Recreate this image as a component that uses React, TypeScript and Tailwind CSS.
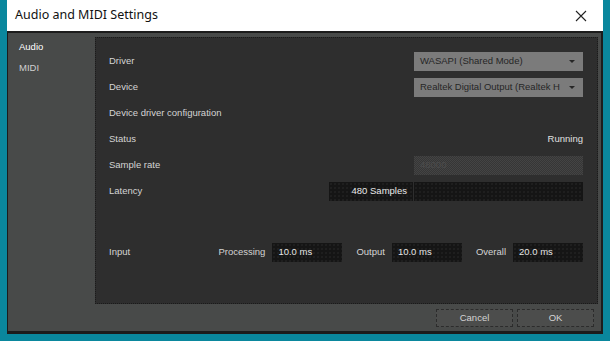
import { ReactNode } from 'react'

const font = { fontFamily: '"Liberation Sans", Arial, sans-serif' }

const dots =
  'bg-[#151515] bg-[image:radial-gradient(#2a2a2a_0.6px,transparent_0.8px)] bg-[length:4px_4px]'

function Row({ label, children }: { label: string; children?: ReactNode }) {
  return (
    <div className="h-[19px] flex items-center justify-between">
      <span className="text-[9.5px] text-[#d4d4d4]">{label}</span>
      {children}
    </div>
  )
}

function Select({ value }: { value: string }) {
  return (
    <div className="w-[169px] h-[19px] bg-[#7b7b7b] flex items-center pl-[6px] pr-[8px] gap-[4px]">
      <span className="flex-1 text-[9.5px] text-[#262626] whitespace-nowrap">{value}</span>
      <span className="w-0 h-0 border-l-[3px] border-r-[3px] border-t-[3px] border-l-transparent border-r-transparent border-t-[#262626]" />
    </div>
  )
}

function TimeBox({ label, value }: { label: string; value: string }) {
  return (
    <div className="flex items-center gap-[7px]">
      <span className="text-[9.5px] text-[#d4d4d4]">{label}</span>
      <div className={`w-[70px] h-[19px] ${dots} flex items-center pl-[6px] text-[9.5px] text-[#e6e6e6]`}>
        {value}
      </div>
    </div>
  )
}

export default function App() {
  return (
    <div className="w-[610px] h-[341px] bg-[#0a879d] overflow-hidden" style={font}>
      <div className="ml-[7px] w-[596px] h-[334px] flex flex-col">
        {/* title bar */}
        <div className="h-[31px] bg-white flex items-center justify-between pl-[8px] pr-[16px] shrink-0">
          <span className="text-[12.5px] text-[#111]" style={{ fontFamily: '"Noto Sans", "Open Sans", sans-serif' }}>
            Audio and MIDI Settings
          </span>
          <svg width="12" height="12" viewBox="0 0 12 12" className="text-[#222]">
            <path d="M1 1L11 11M11 1L1 11" stroke="currentColor" strokeWidth="1.1" />
          </svg>
        </div>

        {/* body */}
        <div className="flex-1 bg-[#484a49] border-[#1c1c1c] border-t-2 border-l border-r-2 border-b-[3px] flex">
          <div className="w-[87px] shrink-0 pt-[7px] pl-[11px] flex flex-col gap-[7px] text-[9.5px]">
            <span className="text-white">Audio</span>
            <span className="text-[#d0d0d0]">MIDI</span>
          </div>

          <div className="flex-1 flex flex-col pt-[4px] pr-[3px]">
            <div className="h-[267px] bg-[#2e2e2e] border border-dotted border-[#1a1a1a] pt-[14px] pl-[13px] pr-[14px] flex flex-col">
              <div className="flex flex-col gap-[7px]">
                <Row label="Driver">
                  <Select value="WASAPI (Shared Mode)" />
                </Row>
                <Row label="Device">
                  <Select value="Realtek Digital Output (Realtek H" />
                </Row>
                <Row label="Device driver configuration" />
                <Row label="Status">
                  <span className="text-[9.5px] text-[#e0e0e0]">Running</span>
                </Row>
                <Row label="Sample rate">
                  <div className="w-[169px] h-[19px] bg-[#3b3b3b] bg-[image:repeating-conic-gradient(#363636_0_25%,#444444_0_50%)] bg-[length:2px_2px] flex items-center pl-[6px] text-[9.5px] text-[#4d4d4d]">
                    48000
                  </div>
                </Row>
                <Row label="Latency">
                  <div className="flex gap-px">
                    <div className={`w-[84px] h-[19px] ${dots} flex items-center justify-end pr-[6px] text-[9.5px] text-[#eaeaea]`}>
                      480 Samples
                    </div>
                    <div className={`w-[169px] h-[19px] ${dots}`} />
                  </div>
                </Row>
              </div>

              <div className="mt-[42px] h-[19px] flex items-center justify-between">
                <span className="text-[9.5px] text-[#d4d4d4]">Input</span>
                <div className="flex items-center gap-[14px]">
                  <TimeBox label="Processing" value="10.0 ms" />
                  <TimeBox label="Output" value="10.0 ms" />
                  <TimeBox label="Overall" value="20.0 ms" />
                </div>
              </div>
            </div>

            <div className="flex justify-end gap-[4px] mt-[5px] pr-[4px]">
              {['Cancel', 'OK'].map(b => (
                <div
                  key={b}
                  className="w-[77px] h-[18px] bg-[#4c4d4c] border border-dashed border-[#2c2c2c] flex items-center justify-center text-[9.5px] text-[#d4d4d4]"
                >
                  {b}
                </div>
              ))}
            </div>
          </div>
        </div>
      </div>
    </div>
  )
}
